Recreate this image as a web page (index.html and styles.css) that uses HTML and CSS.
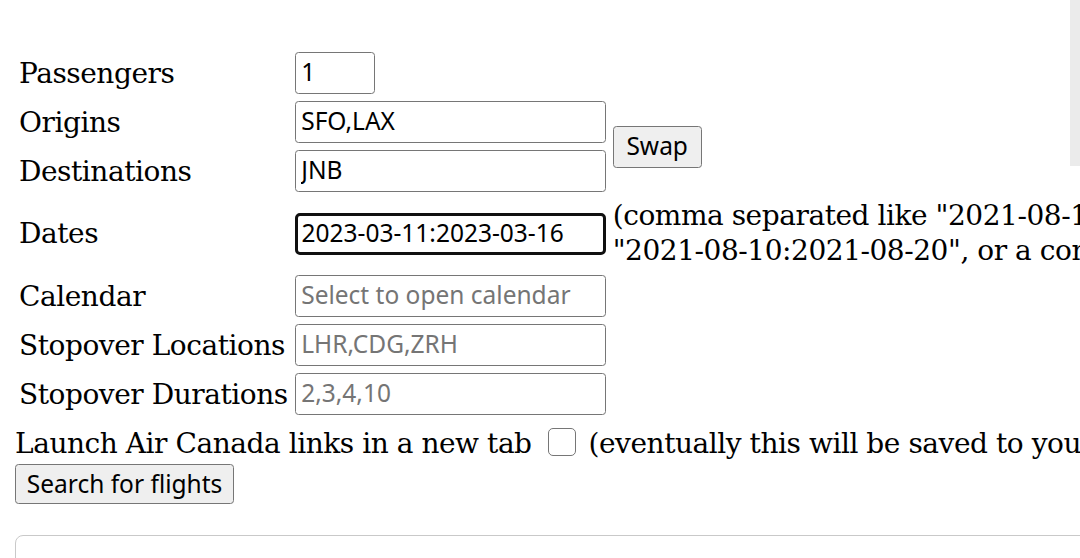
FILE: index.html
```html
<!DOCTYPE html>
<html lang="en">
<head>
<meta charset="utf-8">
<title>Flight search</title>
<link rel="stylesheet" href="styles.css">
</head>
<body class="body">
<div class="edge-bar"></div>
<form class="page">
  <table class="fields">
    <tr>
      <td class="label">Passengers</td>
      <td class="ctrl"><input class="field num" type="text" value="1"></td>
      <td class="extra"></td>
    </tr>
    <tr>
      <td class="label">Origins</td>
      <td class="ctrl"><input class="field wide" type="text" value="SFO,LAX"></td>
      <td class="extra" rowspan="2"><button type="button" class="btn swap">Swap</button></td>
    </tr>
    <tr>
      <td class="label">Destinations</td>
      <td class="ctrl"><input class="field wide" type="text" value="JNB"></td>
    </tr>
    <tr class="dates-row">
      <td class="label">Dates</td>
      <td class="ctrl"><input class="field wide focused" type="text" value="2023-03-11:2023-03-16"></td>
      <td class="extra hint">(comma separated like "2021-08-10,2021-08-11", a range like<br>"2021-08-10:2021-08-20", or a combination)</td>
    </tr>
    <tr>
      <td class="label">Calendar</td>
      <td class="ctrl"><input class="field wide" type="text" placeholder="Select to open calendar"></td>
      <td class="extra"></td>
    </tr>
    <tr>
      <td class="label">Stopover Locations</td>
      <td class="ctrl"><input class="field wide" type="text" placeholder="LHR,CDG,ZRH"></td>
      <td class="extra"></td>
    </tr>
    <tr>
      <td class="label">Stopover Durations</td>
      <td class="ctrl"><input class="field wide" type="text" placeholder="2,3,4,10"></td>
      <td class="extra"></td>
    </tr>
  </table>
  <div class="launch">Launch Air Canada links in a new tab <input type="checkbox" class="check"> (eventually this will be saved to your preferences)</div>
  <button type="button" class="btn search">Search for flights</button>
  <div class="results"></div>
</form>
</body>
</html>
```

FILE: styles.css
```css
html {
  overflow: hidden;
}

.body {
  margin: 0;
  background: #ffffff;
  color: #000000;
  font-family: "DejaVu Serif", "Liberation Serif", serif;
  font-size: 28px;
  letter-spacing: -0.45px;
}

.edge-bar {
  position: absolute;
  top: 0;
  right: 0;
  width: 10px;
  height: 166px;
  background: #ebebeb;
}

.page {
  padding: 47px 0 0 14px;
  width: 1300px;
}

.fields {
  border-spacing: 3px;
  border-collapse: separate;
}

.fields td {
  padding: 2px;
  vertical-align: middle;
  white-space: nowrap;
}

.label {
  text-align: left;
}

.hint {
  line-height: 34.5px;
}

.field {
  box-sizing: border-box;
  height: 42px;
  margin: 0;
  padding: 0 4px 3px 5.5px;
  border: 1.75px solid #767676;
  border-radius: 3.5px;
  background: #ffffff;
  color: #000000;
  font-family: "Noto Sans", "Open Sans", sans-serif;
  font-size: 24.5px;
  letter-spacing: 0;
  display: block;
}

.field::placeholder {
  color: #757575;
}

.num {
  width: 80px;
}

.wide {
  width: 311px;
}

.focused {
  border: 3.5px solid #101010;
  border-radius: 5px;
  padding-left: 3.75px;
}

.btn {
  box-sizing: border-box;
  height: 42px;
  margin: 0;
  padding: 0 0 2px;
  border: 1.75px solid #767676;
  border-radius: 3.5px;
  background: #efefef;
  color: #000000;
  font-family: "Noto Sans", "Open Sans", sans-serif;
  font-size: 24.5px;
  letter-spacing: 0;
  white-space: nowrap;
}

.swap {
  width: 89px;
}

.launch {
  white-space: nowrap;
  line-height: 40px;
  padding-top: 4px;
  padding-left: 1px;
}

.check {
  -webkit-appearance: none;
  appearance: none;
  box-sizing: border-box;
  width: 28px;
  height: 28px;
  margin: 0 4px 0 8px;
  border: 1.75px solid #767676;
  border-radius: 5px;
  background: #ffffff;
  vertical-align: -3px;
}

.search {
  display: block;
  width: 219px;
  height: 40px;
  margin-left: 1px;
}

.results {
  margin-top: 31px;
  margin-left: 1px;
  width: 1200px;
  height: 60px;
  border: 1.75px solid #c9c9c9;
  border-radius: 8px;
}
```
